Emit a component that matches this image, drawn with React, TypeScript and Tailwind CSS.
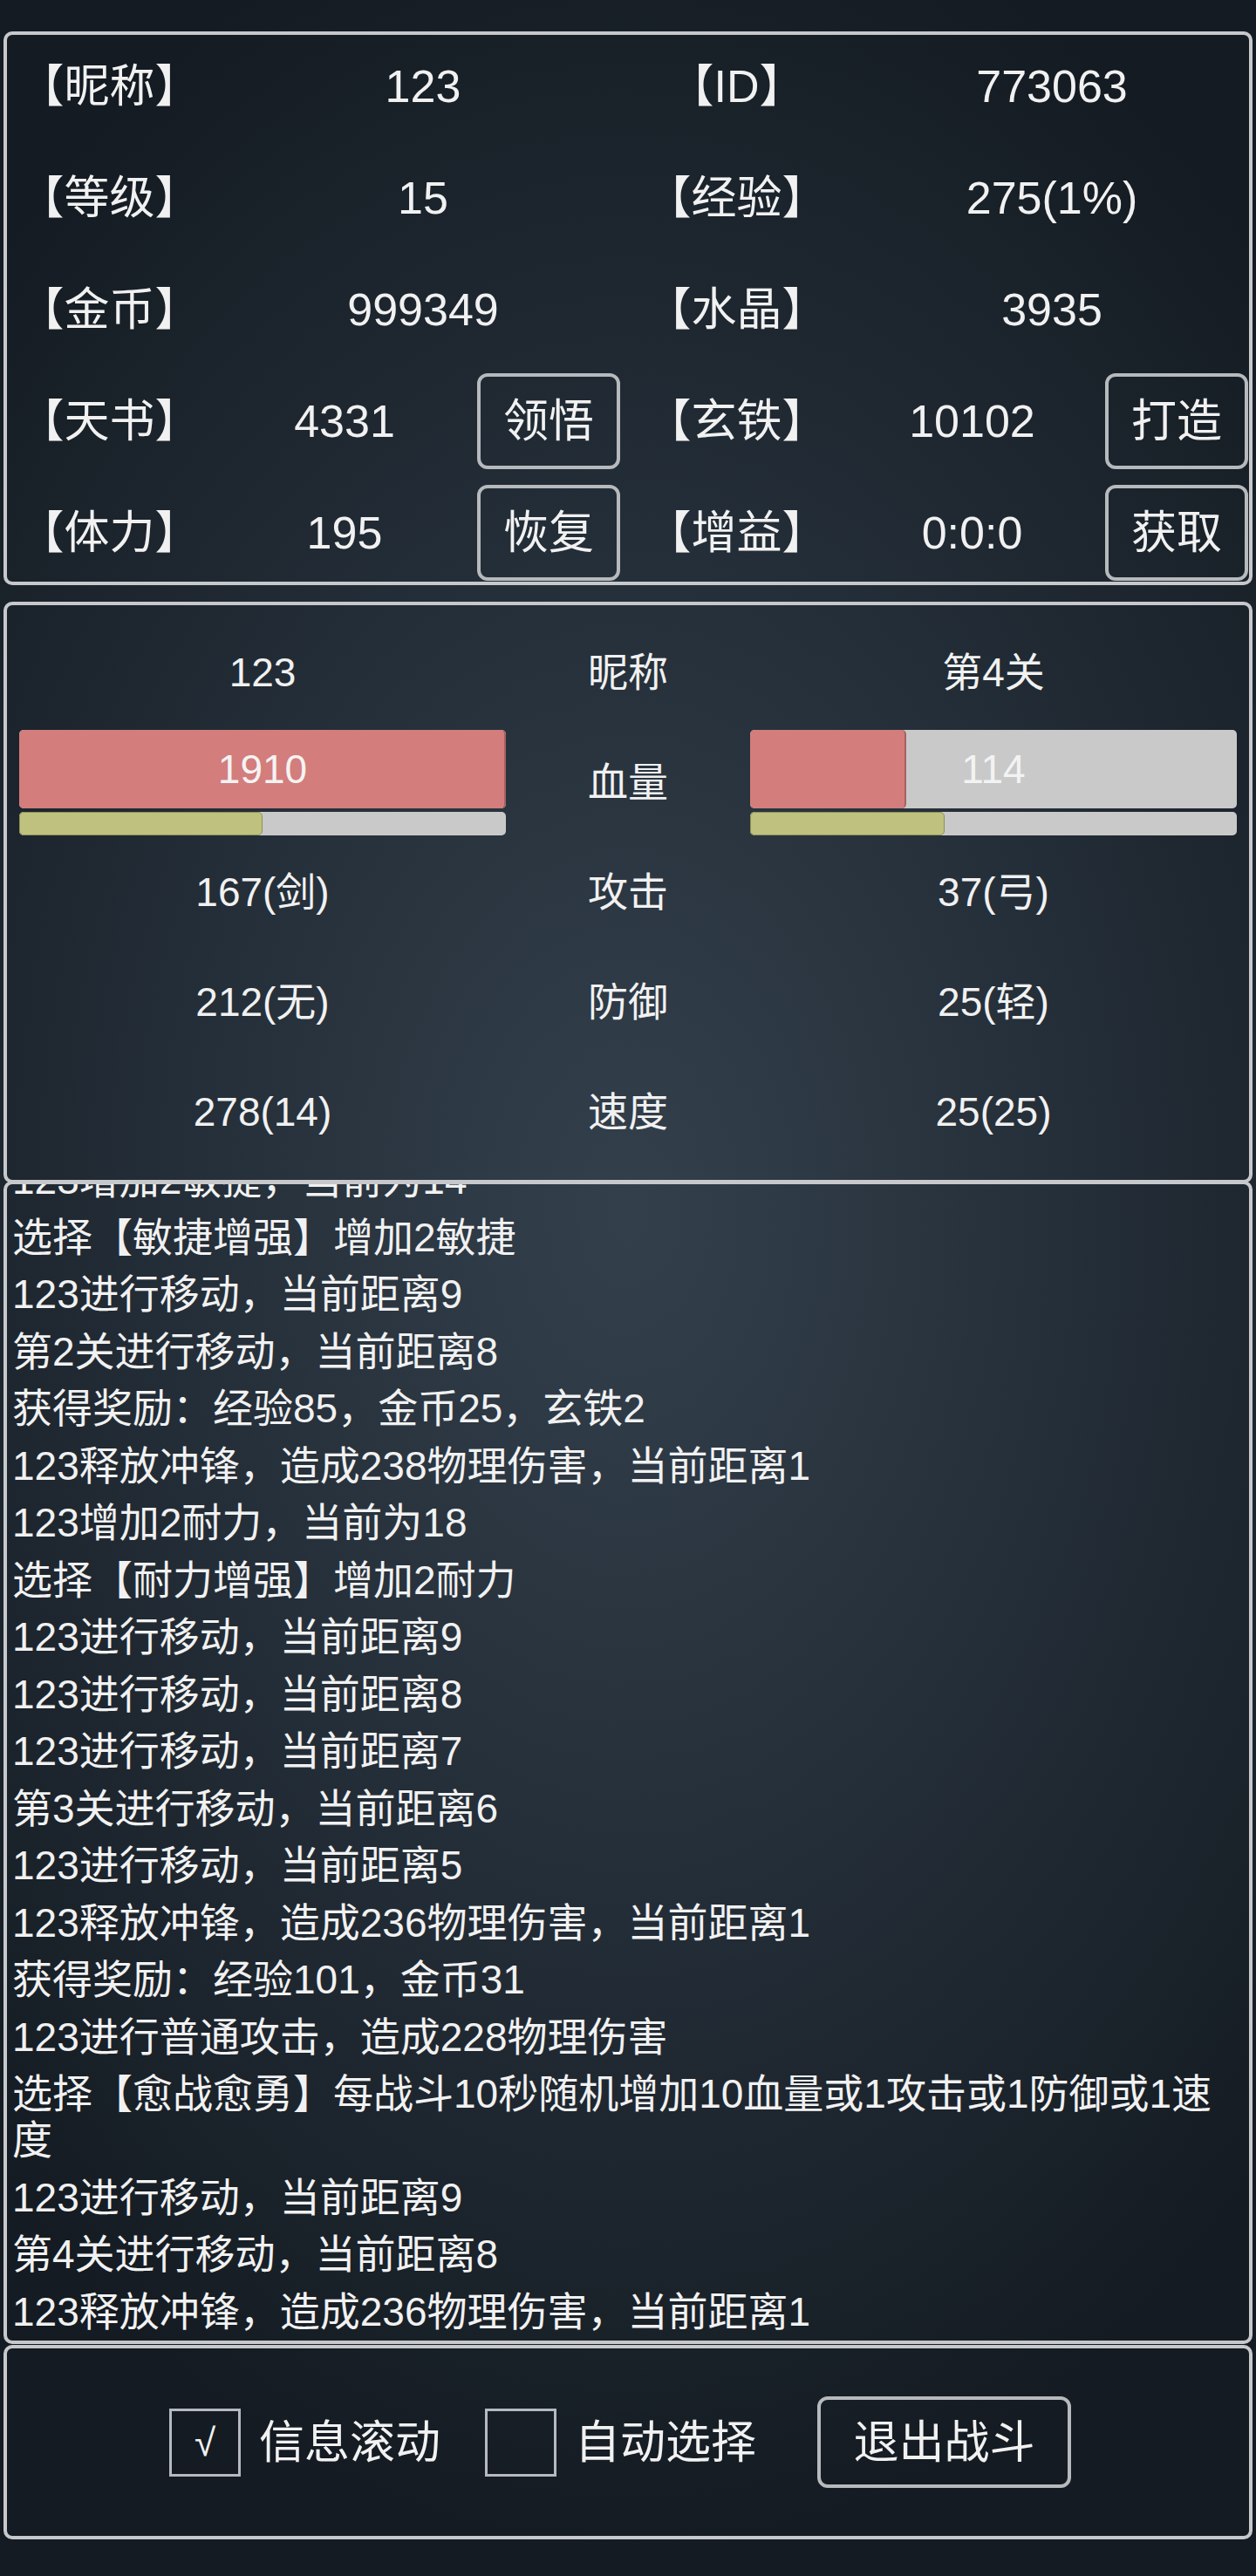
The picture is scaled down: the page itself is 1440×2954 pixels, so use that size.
import React from "react";

type Row = {
  l1: string;
  v1: string;
  b1?: string;
  l2: string;
  v2: string;
  b2?: string;
};

const rows: Row[] = [
  { l1: "【昵称】", v1: "123", l2: "【ID】", v2: "773063" },
  { l1: "【等级】", v1: "15", l2: "【经验】", v2: "275(1%)" },
  { l1: "【金币】", v1: "999349", l2: "【水晶】", v2: "3935" },
  { l1: "【天书】", v1: "4331", b1: "领悟", l2: "【玄铁】", v2: "10102", b2: "打造" },
  { l1: "【体力】", v1: "195", b1: "恢复", l2: "【增益】", v2: "0:0:0", b2: "获取" },
];

const logs: string[] = [
  "123增加2敏捷，当前为14",
  "选择【敏捷增强】增加2敏捷",
  "123进行移动，当前距离9",
  "第2关进行移动，当前距离8",
  "获得奖励：经验85，金币25，玄铁2",
  "123释放冲锋，造成238物理伤害，当前距离1",
  "123增加2耐力，当前为18",
  "选择【耐力增强】增加2耐力",
  "123进行移动，当前距离9",
  "123进行移动，当前距离8",
  "123进行移动，当前距离7",
  "第3关进行移动，当前距离6",
  "123进行移动，当前距离5",
  "123释放冲锋，造成236物理伤害，当前距离1",
  "获得奖励：经验101，金币31",
  "123进行普通攻击，造成228物理伤害",
  "WRAP",
  "123进行移动，当前距离9",
  "第4关进行移动，当前距离8",
  "123释放冲锋，造成236物理伤害，当前距离1",
];

function Btn({ children }: { children: React.ReactNode }) {
  return (
    <div className="flex h-[110px] w-[164px] items-center justify-center rounded-[12px] border-[4px] border-[#b7babd] text-[52px]">
      {children}
    </div>
  );
}

function Bars({ hp, ex, label }: { hp: number; ex: number; label: string }) {
  return (
    <div className="flex h-full flex-col justify-center gap-[4px] px-[14px]">
      <div className="relative h-[90px] overflow-hidden rounded-[5px] bg-[#c9c9c9]">
        <div
          className="h-full rounded-[5px] border-r-[2px] border-[#a9605f] bg-[#d37d7c]"
          style={{ width: `${hp}%` }}
        />
        <div className="absolute inset-0 flex items-center justify-center text-[46px] text-[#f3f3f3]">
          {label}
        </div>
      </div>
      <div className="h-[27px] overflow-hidden rounded-[5px] bg-[#c9c9c9]">
        <div
          className="h-full rounded-[5px] border border-[#8f9057] bg-[#bfc27f]"
          style={{ width: `${ex}%` }}
        />
      </div>
    </div>
  );
}

function C({ children, className = "" }: { children?: React.ReactNode; className?: string }) {
  return <div className={`flex items-center justify-center ${className}`}>{children}</div>;
}

export default function App() {
  return (
    <div className="min-h-[2954px] w-full bg-[radial-gradient(ellipse_72%_52%_at_50%_47%,#33404c_0%,#242e38_50%,#141b22_100%)] pt-[36px] font-['Liberation_Sans','Noto_Sans_CJK_SC',sans-serif] text-[#f1f1f1]">
      {/* Player info panel */}
      <div className="mx-[4px] h-[635px] rounded-[10px] border-[4px] border-[#c6c8cb]">
        <div className="-mt-[5px] grid auto-rows-[128px] grid-cols-[235px_304px_180px_235px_305px_165px] text-[52px] leading-[60px]">
          {rows.map((r, i) => (
            <React.Fragment key={i}>
              <C>{r.l1}</C>
              {r.b1 ? (
                <>
                  <C>{r.v1}</C>
                  <div className="flex items-center">
                    <Btn>{r.b1}</Btn>
                  </div>
                </>
              ) : (
                <C className="col-span-2">{r.v1}</C>
              )}
              <C>{r.l2}</C>
              {r.b2 ? (
                <>
                  <C>{r.v2}</C>
                  <div className="flex items-center">
                    <Btn>{r.b2}</Btn>
                  </div>
                </>
              ) : (
                <C className="col-span-2 pl-[18px]">{r.v2}</C>
              )}
            </React.Fragment>
          ))}
        </div>
      </div>

      {/* Battle panel */}
      <div className="mx-[4px] mt-[19px] h-[667px] rounded-[10px] border-[4px] border-[#c6c8cb] pt-[14px]">
        <div className="grid auto-rows-[126px] grid-cols-[586px_252px_586px] text-[46px] leading-[54px]">
          <C>123</C>
          <C>昵称</C>
          <C>第4关</C>
          <Bars hp={100} ex={50} label="1910" />
          <C>血量</C>
          <Bars hp={32} ex={40} label="114" />
          <C>167(剑)</C>
          <C>攻击</C>
          <C>37(弓)</C>
          <C>212(无)</C>
          <C>防御</C>
          <C>25(轻)</C>
          <C>278(14)</C>
          <C>速度</C>
          <C>25(25)</C>
        </div>
      </div>

      {/* Log panel */}
      <div className="mx-[4px] -mt-[3px] flex h-[1334px] flex-col justify-end overflow-hidden rounded-[10px] border-[4px] border-[#c6c8cb] pl-[6px] text-[46px] leading-[53px]">
        {logs.map((l, i) =>
          l === "WRAP" ? (
            <div key={i} className="shrink-0 whitespace-nowrap py-[6.25px]">
              选择【愈战愈勇】每战斗10秒随机增加10血量或1攻击或1防御或1速
              <br />度
            </div>
          ) : (
            <div key={i} className="shrink-0 whitespace-nowrap py-[6.25px]">
              {l}
            </div>
          )
        )}
      </div>

      {/* Bottom controls */}
      <div className="mx-[4px] mt-[1px] flex h-[223px] items-center rounded-[10px] border-[4px] border-[#c6c8cb] pl-[186px] text-[52px]">
        <div className="flex h-[78px] w-[82px] items-center justify-center border-[3px] border-[#b6bac0] text-[44px]">
          √
        </div>
        <span className="ml-[21px]">信息滚动</span>
        <div className="ml-[51px] h-[78px] w-[82px] border-[3px] border-[#b6bac0]" />
        <span className="ml-[21px]">自动选择</span>
        <div className="ml-[70px] flex h-[105px] w-[291px] items-center justify-center rounded-[12px] border-[4px] border-[#b7babd]">
          退出战斗
        </div>
      </div>
    </div>
  );
}
